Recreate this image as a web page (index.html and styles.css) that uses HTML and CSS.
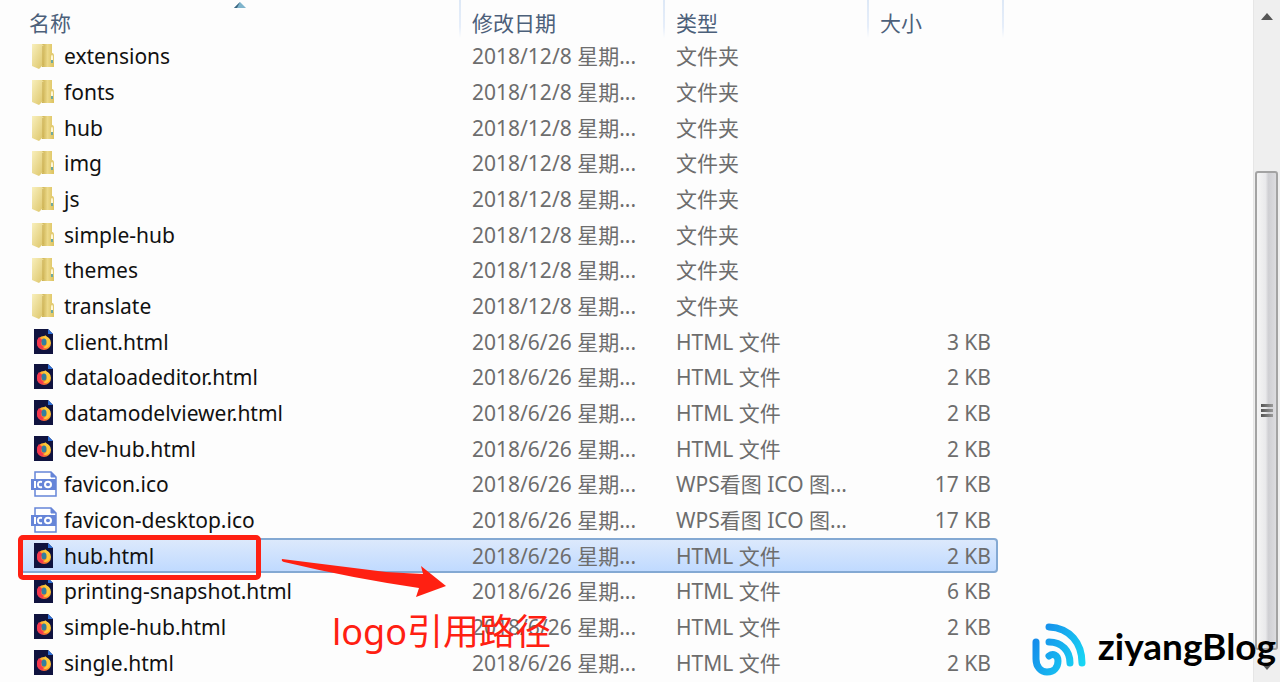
FILE: index.html
```
<!DOCTYPE html>
<html lang="zh-CN">
<head>
  <meta charset="UTF-8" />
  <meta name="viewport" content="width=device-width, initial-scale=1.0"/>
  <title>logo引用路径</title>
  <link rel="stylesheet" href="styles.css">
</head>
<body>
  <svg class="defs" aria-hidden="true">
    <defs>
      <linearGradient id="folderFront" x1="0" y1="0" x2="1" y2="1">
        <stop offset="0" stop-color="#f8efbc"/>
        <stop offset="1" stop-color="#dcc466"/>
      </linearGradient>
      <linearGradient id="folderBack" x1="0" y1="0" x2="1" y2="0">
        <stop offset="0" stop-color="#c4a844"/>
        <stop offset="0.5" stop-color="#ecd98a"/>
        <stop offset="1" stop-color="#dcc25e"/>
      </linearGradient>
      <linearGradient id="fire" x1="1" y1="0" x2="0" y2="1">
        <stop offset="0" stop-color="#fff04a"/>
        <stop offset="0.5" stop-color="#ff9a22"/>
        <stop offset="1" stop-color="#ee2456"/>
      </linearGradient>
      <linearGradient id="brandBlue" gradientUnits="userSpaceOnUse" x1="0" y1="10" x2="54" y2="40">
        <stop offset="0" stop-color="#1684ea"/>
        <stop offset="1" stop-color="#18d8f4"/>
      </linearGradient>
      <symbol id="folder" viewBox="0 0 28 28">
        <path d="M11 2h11v9l2 3v11H12z" fill="url(#folderBack)"/>
        <path d="M2 2h10l2 2v18l-5 5-7-3z" fill="url(#folderFront)"/>
        <path d="M13 4v19" stroke="#c4a647"/>
        <path d="M20 14q0-3 2-3t2 3v6h-4z" fill="#e3cb72"/>
        <path d="M21 15q0-2 1-2t1 2v5h-2z" fill="#fff8d8"/>
        <path d="M21 18h2v3h-2z" fill="#6fa9a0"/>
      </symbol>
      <symbol id="html" viewBox="0 0 28 28">
        <path d="M4 1h14l5 5v20H4z" fill="#10133f"/>
        <path d="M18 1l5 5h-5z" fill="#2c70d8"/>
        <circle cx="14" cy="15" r="7" fill="url(#fire)"/>
        <path d="M7 15q0-4 2-6l2 2 2 1-2 3q0 4 4 4-3 3-6 1-2-2-2-5z" fill="#f5374f"/>
        <path d="M15 7l4 4q2 5-1 8-3 2-5 0 4-1 4-4t-3-5z" fill="#ffc93a"/>
        <ellipse cx="14" cy="14" rx="2.500" ry="3.500" fill="#347f9e"/>
      </symbol>
      <symbol id="ico" viewBox="0 0 28 28">
        <path d="M5 9V2h16l5 5v19H5v-6" fill="#fff" stroke="#6685d8" stroke-width="1.5"/>
        <path d="M21 2v5h5z" fill="#6685d8" stroke="#6685d8"/>
        <path d="M1 9h25v11H1z" fill="#6685d8"/>
        <path d="M5 11v7M12 12q-4-1-4 2.500t4 2.500" fill="none" stroke="#fff" stroke-width="2"/>
        <ellipse cx="18" cy="14.500" rx="3" ry="2.800" fill="none" stroke="#fff" stroke-width="2"/>
      </symbol>
    </defs>
  </svg>

  <main class="explorer">
    <table class="files">
      <colgroup>
        <col class="col-name"><col class="col-date"><col class="col-type"><col class="col-size"><col class="col-gap"><col>
      </colgroup>
      <thead>
        <tr>
          <th class="sorted" aria-sort="ascending">名称
            <svg class="sort-arrow" viewBox="0 0 12 6"><path d="M6 0l6 6H0z" fill="#7fb4cc"/><path d="M6 0L0 6h3z" fill="#3d6680"/></svg>
          </th>
          <th>修改日期</th>
          <th>类型</th>
          <th>大小</th>
          <td class="gap"></td>
          <td></td>
        </tr>
      </thead>
      <tbody id="fileRows"></tbody>
    </table>

    <div class="mark"></div>
    <svg class="arrow" viewBox="0 0 166 40"><path d="M1 1Q0 3 3 4Q70 20 138 30L135 39L165 28L140 8L142 16Q122 15 105 14Z" fill="#ff2012"/></svg>
    <div class="note">logo引用路径</div>
  </main>

  <aside class="scrollbar">
    <button class="scroll-btn" aria-label="向上滚动"><svg viewBox="0 0 12 7"><path d="M6 0l6 7H0z" fill="#555"/></svg></button>
    <div class="track"></div>
    <button class="thumb" aria-label="滚动条"><span></span><span></span><span></span></button>
    <button class="scroll-btn" aria-label="向下滚动"><svg viewBox="0 0 12 7"><path d="M0 0h12L6 7z" fill="#555"/></svg></button>
  </aside>

  <div class="brand">
    <svg viewBox="0 0 54 54" fill="none" stroke="url(#brandBlue)" stroke-width="7" stroke-linecap="round">
      <path d="M4 20V37C4 45 9 50 15 50C22 50 26 45 26 39C26 33 21 31 17 34"/>
      <path d="M17 20C30 20 38 29 38 41"/>
      <path d="M17 5C38 6 50 21 50 41"/>
    </svg>
    <span>ziyangBlog</span>
  </div>

  <script>
    const types = { folder: '文件夹', html: 'HTML 文件', ico: 'WPS看图 ICO 图...' };
    const files = [
      ['folder', 'extensions'],
      ['folder', 'fonts'],
      ['folder', 'hub'],
      ['folder', 'img'],
      ['folder', 'js'],
      ['folder', 'simple-hub'],
      ['folder', 'themes'],
      ['folder', 'translate'],
      ['html', 'client.html', '3 KB'],
      ['html', 'dataloadeditor.html', '2 KB'],
      ['html', 'datamodelviewer.html', '2 KB'],
      ['html', 'dev-hub.html', '2 KB'],
      ['ico', 'favicon.ico', '17 KB'],
      ['ico', 'favicon-desktop.ico', '17 KB'],
      ['html', 'hub.html', '2 KB'],
      ['html', 'printing-snapshot.html', '6 KB'],
      ['html', 'simple-hub.html', '2 KB'],
      ['html', 'single.html', '2 KB']
    ];

    document.getElementById('fileRows').innerHTML = files.map(([kind, name, size]) => `
      <tr class="${name === 'hub.html' ? 'selected' : ''}">
        <td><div class="name"><svg><use href="#${kind}"/></svg><span>${name}</span></div></td>
        <td>${kind === 'folder' ? '2018/12/8' : '2018/6/26'} 星期...</td>
        <td>${types[kind]}</td>
        <td class="size">${size || ''}</td>
      </tr>`).join('');
  </script>
</body>
</html>
```
FILE: styles.css
```
* {
  box-sizing: border-box;
}
body {
  margin: 0;
  min-height: 100vh;
  display: flex;
  position: relative;
  background: #fdfdfd;
  color: #6d6d6d;
  font-family: "Noto Sans", "Noto Sans CJK SC", sans-serif;
  font-size: 21px;
  line-height: 28px;
}
.defs {
  position: absolute;
  width: 0;
  height: 0;
}
.explorer {
  flex: 1;
  position: relative;
  padding-left: 20px;
}
.files {
  width: 100%;
  table-layout: fixed;
  border-collapse: separate;
  border-spacing: 0;
}
.col-name {
  width: 441px;
}
.col-date, .col-type {
  width: 204px;
}
.col-size {
  width: 129px;
}
.col-gap {
  width: 6px;
}
.files th, .files td {
  padding: 0 0 0 11px;
  text-align: left;
  white-space: nowrap;
}
.files th {
  height: 38px;
  padding-top: 8px;
  color: #4c607a;
  font-weight: normal;
}
.files thead th:not(:nth-child(4)), .files .gap {
  background: linear-gradient(to bottom, #dde8f6, #e6eefa 70%, #fdfdfd) right top / 2px 38px no-repeat;
}
.files th.sorted {
  position: relative;
  padding-left: 9px;
}
.sort-arrow {
  position: absolute;
  top: 2px;
  left: 50%;
  width: 12px;
  height: 6px;
  margin-left: -7px;
}
.files .gap {
  padding: 0;
}
.files tbody td {
  height: 36px;
}
.files tbody tr:nth-child(3n) td {
  height: 35px;
}
.name {
  display: flex;
  align-items: center;
  gap: 6px;
  color: #111;
}
.name svg {
  width: 28px;
  height: 28px;
}
.files td.size {
  padding: 0 7px 0 0;
  text-align: right;
}
.files .selected td {
  background: linear-gradient(to bottom, #dce9fc, #c0daff);
  border-top: 2px solid #84a9d3;
  border-bottom: 2px solid #84a9d3;
}
.files .selected td:first-child {
  border-left: 2px solid #84a9d3;
  border-radius: 4px 0 0 4px;
}
.files .selected td:last-child {
  padding-right: 5px;
  border-right: 2px solid #84a9d3;
  border-radius: 0 4px 4px 0;
}
.files tbody td:first-child {
  padding-left: 10px;
}
.files .selected td:first-child {
  padding-left: 8px;
}

/* red annotations */
.mark {
  position: absolute;
  top: 535px;
  left: 18px;
  width: 243px;
  height: 45px;
  border: 5px solid #ff2012;
  border-radius: 5px;
}
.arrow {
  position: absolute;
  top: 558px;
  left: 281px;
  width: 166px;
  height: 40px;
}
.note {
  position: absolute;
  top: 608px;
  left: 332px;
  color: #ff2012;
  font-size: 36px;
  line-height: 48px;
  white-space: nowrap;
}

.scrollbar {
  width: 27px;
  display: flex;
  flex-direction: column;
  padding: 0 2px 0 1px;
  background: #efefef;
  border-left: 1px solid #e6e6e6;
}
.scroll-btn {
  height: 32px;
  padding: 0;
  border: none;
  background: none;
}
.scroll-btn svg {
  display: block;
  width: 12px;
  height: 7px;
  margin: 0 auto;
}
.track {
  flex: 140;
}
.thumb {
  flex: 479;
  display: flex;
  flex-direction: column;
  align-items: center;
  justify-content: center;
  gap: 2px;
  padding: 0;
  border: 2px solid #a3a3a3;
  border-radius: 3px;
  background: linear-gradient(to right, #f5f5f5, #e9e9eb 45%, #cfcfd3 60%, #dcdcdf);
}
.thumb span {
  width: 12px;
  height: 3px;
  background: linear-gradient(to right, #555, #999);
}

.brand {
  position: absolute;
  right: 4px;
  bottom: 6px;
  display: flex;
  align-items: center;
  gap: 12px;
  color: #000;
  font-family: Lato, sans-serif;
  font-size: 37px;
  font-weight: bold;
  line-height: 48px;
}
.brand svg {
  width: 54px;
  height: 54px;
}
.brand span {
  padding-bottom: 6px;
}
```
